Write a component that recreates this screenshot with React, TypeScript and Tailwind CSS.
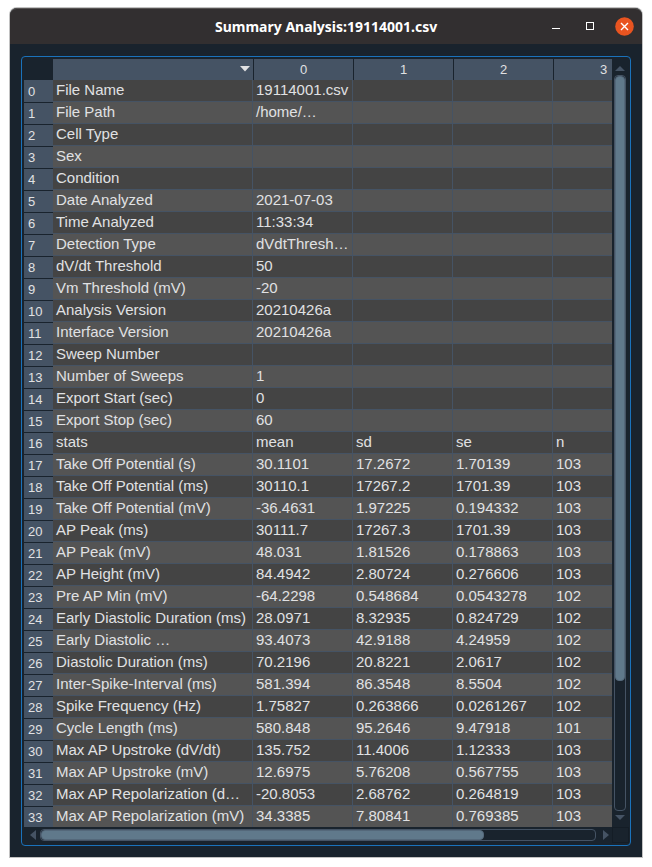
const rows: string[][] = [
  ['File Name', '19114001.csv'],
  ['File Path', '/home/…'],
  ['Cell Type'],
  ['Sex'],
  ['Condition'],
  ['Date Analyzed', '2021-07-03'],
  ['Time Analyzed', '11:33:34'],
  ['Detection Type', 'dVdtThresh…'],
  ['dV/dt Threshold', '50'],
  ['Vm Threshold (mV)', '-20'],
  ['Analysis Version', '20210426a'],
  ['Interface Version', '20210426a'],
  ['Sweep Number'],
  ['Number of Sweeps', '1'],
  ['Export Start (sec)', '0'],
  ['Export Stop (sec)', '60'],
  ['stats', 'mean', 'sd', 'se', 'n'],
  ['Take Off Potential (s)', '30.1101', '17.2672', '1.70139', '103'],
  ['Take Off Potential (ms)', '30110.1', '17267.2', '1701.39', '103'],
  ['Take Off Potential (mV)', '-36.4631', '1.97225', '0.194332', '103'],
  ['AP Peak (ms)', '30111.7', '17267.3', '1701.39', '103'],
  ['AP Peak (mV)', '48.031', '1.81526', '0.178863', '103'],
  ['AP Height (mV)', '84.4942', '2.80724', '0.276606', '103'],
  ['Pre AP Min (mV)', '-64.2298', '0.548684', '0.0543278', '102'],
  ['Early Diastolic Duration (ms)', '28.0971', '8.32935', '0.824729', '102'],
  ['Early Diastolic …', '93.4073', '42.9188', '4.24959', '102'],
  ['Diastolic Duration (ms)', '70.2196', '20.8221', '2.0617', '102'],
  ['Inter-Spike-Interval (ms)', '581.394', '86.3548', '8.5504', '102'],
  ['Spike Frequency (Hz)', '1.75827', '0.263866', '0.0261267', '102'],
  ['Cycle Length (ms)', '580.848', '95.2646', '9.47918', '101'],
  ['Max AP Upstroke (dV/dt)', '135.752', '11.4006', '1.12333', '103'],
  ['Max AP Upstroke (mV)', '12.6975', '5.76208', '0.567755', '103'],
  ['Max AP Repolarization (d…', '-20.8053', '2.68762', '0.264819', '103'],
  ['Max AP Repolarization (mV)', '34.3385', '7.80841', '0.769385', '103'],
]

function TitleBar() {
  return (
    <header className="grid h-9 shrink-0 grid-cols-[1fr_auto_1fr] items-center rounded-t-[7px] border-t border-[#575453] bg-[#322f30]">
      <span />
      <h1 className="w-[222px] whitespace-nowrap font-['Noto_Sans',sans-serif] text-[14px] leading-5 font-bold text-white">
        Summary Analysis:19114001.csv
      </h1>
      <div className="flex items-center justify-end pr-2 pb-px">
        <svg width="8" height="10" className="mr-[26px]" shapeRendering="crispEdges">
          <rect y="7" width="8" height="1" fill="#fff" />
        </svg>
        <svg width="8" height="8" className="mr-[21px]" shapeRendering="crispEdges">
          <rect x="0.5" y="0.5" width="7" height="7" fill="none" stroke="#fff" />
        </svg>
        <svg width="19" height="19">
          <circle cx="9.5" cy="9.5" r="9.3" fill="#e95420" />
          <path d="M6 6l7 7M13 6l-7 7" stroke="#fff" strokeWidth="1.4" />
        </svg>
      </div>
    </header>
  )
}

function HeaderCell({ label }: { label: string }) {
  return (
    <div className="w-[100px] shrink-0 border-l border-[#19232d] bg-[#455364] pt-[2px] text-center text-[13px] leading-[18px]">
      {label}
    </div>
  )
}

function Table() {
  return (
    <div className="h-[768px] w-[588px] overflow-hidden">
      <div className="flex h-[21px] w-[629px] pl-[29px]">
        <div className="flex w-[200px] shrink-0 justify-end bg-[#455364] pt-[7px] pr-[3px]">
          <svg width="10" height="6">
            <path d="M0 0h10L5 5.5z" fill="#e0e1e3" />
          </svg>
        </div>
        {['0', '1', '2', '3'].map((c) => (
          <HeaderCell key={c} label={c} />
        ))}
      </div>
      {rows.map((row, i) => (
        <div key={i} className="flex h-[22px] w-[629px]">
          <div
            className={`w-[29px] shrink-0 border-b border-[#19232d] bg-[#455364] pl-[4px] text-[13px] leading-[18px] ${
              i === 0 ? 'h-[23px] pt-[3px]' : 'mt-px h-[22px] pt-[2px]'
            }`}
          >
            {i}
          </div>
          {[0, 1, 2, 3, 4].map((c) => (
            <div
              key={c}
              className={`shrink-0 overflow-hidden border-r border-b border-[#455364] pl-[3px] text-[15px] leading-5 whitespace-nowrap ${
                c === 0 ? 'w-[200px]' : 'w-[100px]'
              } ${i % 2 === 0 ? 'bg-[#444444]' : 'bg-[#545454]'}`}
            >
              {row[c]}
            </div>
          ))}
        </div>
      ))}
    </div>
  )
}

function VerticalScrollbar() {
  return (
    <div className="flex h-[768px] w-4 flex-col items-center">
      <svg width="10" height="5" className="mt-[7px] mb-1">
        <path d="M0 5h10L5 0z" fill="#455364" />
      </svg>
      <div className="h-[736px] w-3 rounded-[4px] border border-[#455364]">
        <div className="h-[605px] w-[10px] rounded-[4px] border border-[#54687a] bg-[#60798b]" />
      </div>
      <svg width="10" height="5" className="mt-1">
        <path d="M0 0h10L5 5z" fill="#455364" />
      </svg>
    </div>
  )
}

function HorizontalScrollbar() {
  return (
    <div className="flex h-4 w-[588px] items-center pl-[6px]">
      <svg width="6" height="10" className="mr-1">
        <path d="M6 0v10L0 5z" fill="#455364" />
      </svg>
      <div className="h-3 w-[556px] rounded-[4px] border border-[#455364]">
        <div className="h-[10px] w-[443px] rounded-[4px] border border-[#54687a] bg-[#60798b]" />
      </div>
      <svg width="6" height="10" className="ml-[7px]">
        <path d="M0 0v10l6-5z" fill="#455364" />
      </svg>
    </div>
  )
}

export default function App() {
  return (
    <div className="h-[867px] w-[652px] overflow-hidden bg-white px-[10px] pt-2 font-['Liberation_Sans',Arial,sans-serif] text-[#e0e1e3]">
      <main className="flex h-[849px] w-[632px] flex-col rounded-t-[7px] bg-[#19232d] shadow-[0_0_0_1px_#c2c2c2]">
        <TitleBar />
        <section className="mt-3 ml-[11px] h-[790px] w-[610px] rounded-[4px] border border-[#1a72bb] pt-[2px] pl-[2px]">
          <div className="flex">
            <Table />
            <VerticalScrollbar />
          </div>
          <div className="flex">
            <HorizontalScrollbar />
            <div className="h-4 w-[17px] border border-[#141d26]" />
          </div>
        </section>
      </main>
    </div>
  )
}
